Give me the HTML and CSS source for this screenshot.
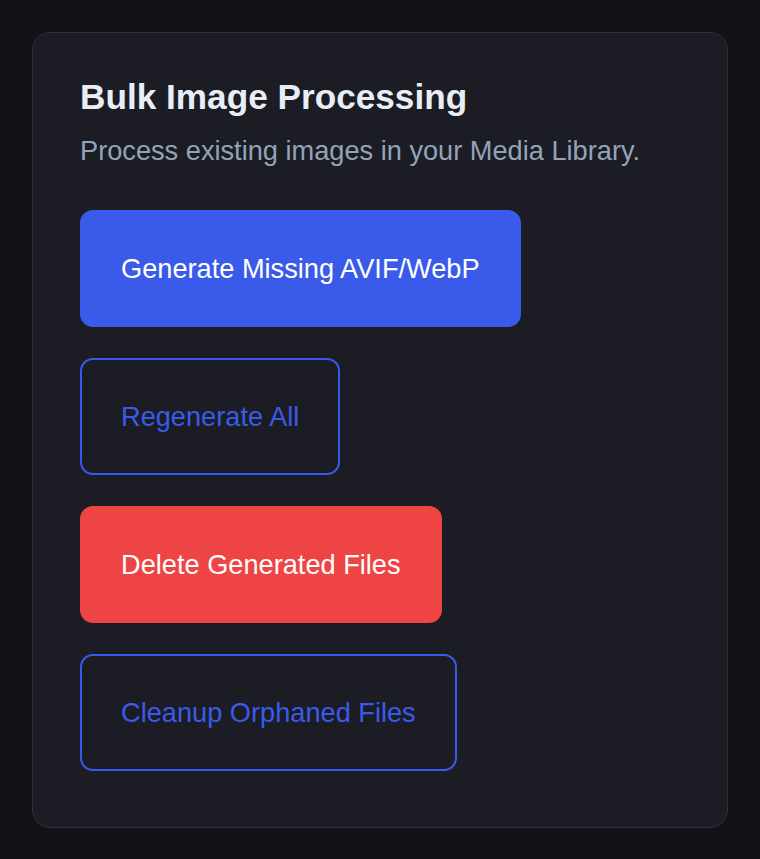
FILE: index.html
```html
<!DOCTYPE html>
<html>
<head>
<meta charset="utf-8">
<link rel="stylesheet" href="styles.css">
</head>
<body>
<div class="card">
  <h2 class="title">Bulk Image Processing</h2>
  <p class="subtitle">Process existing images in your Media Library.</p>
  <div class="actions">
    <button class="btn btn-primary">Generate Missing AVIF/WebP</button>
    <button class="btn btn-outline">Regenerate All</button>
    <button class="btn btn-danger">Delete Generated Files</button>
    <button class="btn btn-outline">Cleanup Orphaned Files</button>
  </div>
</div>
</body>
</html>
```
FILE: styles.css
```css
html, body {
  margin: 0;
  background: #111116;
}
body {
  padding: 32px;
  font-family: "Liberation Sans", Arial, sans-serif;
}
.card {
  background: #1c1c25;
  border: 1px solid #2f2f3e;
  border-radius: 18px;
  padding: 44px 47px 56px;
}
.title {
  margin: 0 0 20px;
  font-size: 35.2px;
  line-height: 39px;
  font-weight: 700;
  color: #e9eef6;
}
.subtitle {
  margin: 0 0 44px;
  font-size: 27.2px;
  line-height: 30px;
  color: #94a3b8;
}
.actions {
  display: flex;
  flex-direction: column;
  align-items: flex-start;
  gap: 31px;
}
.btn {
  font-family: "Liberation Sans", Arial, sans-serif;
  font-size: 27.2px;
  line-height: 35px;
  padding: 39px 39px;
  border: 2px solid transparent;
  border-radius: 13px;
  cursor: pointer;
}
.btn-primary {
  background: #3a5be9;
  border-color: #3a5be9;
  color: #ffffff;
}
.btn-outline {
  background: transparent;
  border-color: #3a5be9;
  color: #3a5be9;
}
.btn-danger {
  background: #ef4444;
  border-color: #ef4444;
  color: #ffffff;
}
```
